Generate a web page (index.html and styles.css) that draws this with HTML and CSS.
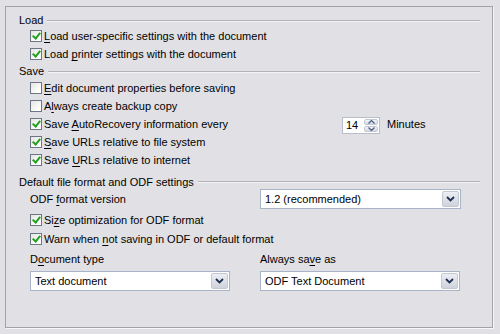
FILE: index.html
```html
<!DOCTYPE html>
<html lang="en">

<head>
    <meta charset="UTF-8">
    <title>Load/Save - General</title>
    <link rel="stylesheet" href="styles.css">
</head>

<body>
    <div class="panel">
        <div class="group-title"><span>Load</span></div>
        <div class="rows">
            <div class="row"><span class="check on"></span><span><u>L</u>oad user-specific settings with the document</span></div>
            <div class="row"><span class="check on"></span><span>Load <u>p</u>rinter settings with the document</span></div>
        </div>

        <div class="group-title save"><span>Save</span></div>
        <div class="rows">
            <div class="row"><span class="check"></span><span><u>E</u>dit document properties before saving</span></div>
            <div class="row"><span class="check"></span><span>A<u>l</u>ways create backup copy</span></div>
            <div class="row autosave">
                <span class="check on"></span><span class="label">Save <u>A</u>utoRecovery information every</span>
                <div class="spin">
                    <span class="spin-value">14</span>
                    <span class="spin-buttons">
                        <span class="spin-btn"><svg width="7" height="4" viewBox="0 0 7 4"><path d="M0.5 3.5 L3.5 0.5 L6.5 3.5" fill="none" stroke="#4d6185" stroke-width="1.3"/></svg></span>
                        <span class="spin-btn"><svg width="7" height="4" viewBox="0 0 7 4"><path d="M0.5 0.5 L3.5 3.5 L6.5 0.5" fill="none" stroke="#4d6185" stroke-width="1.3"/></svg></span>
                    </span>
                </div>
                <span class="unit">Minutes</span>
            </div>
            <div class="row"><span class="check on"></span><span><u>S</u>ave URLs relative to file system</span></div>
            <div class="row"><span class="check on"></span><span>Save <u>U</u>RLs relative to internet</span></div>
        </div>

        <div class="group-title odf"><span>Default file format and ODF settings</span></div>
        <div class="rows">
            <div class="row version">
                <span class="label">ODF <u>f</u>ormat version</span>
                <div class="combo wide">
                    <span class="combo-text">1.2 (recommended)</span>
                    <span class="combo-btn"><svg width="9" height="6" viewBox="0 0 9 6"><path d="M1 1 L4.5 4.5 L8 1" fill="none" stroke="#1f2f4f" stroke-width="1.8"/></svg></span>
                </div>
            </div>
            <div class="row size"><span class="check on"></span><span>Si<u>z</u>e optimization for ODF format</span></div>
            <div class="row warn"><span class="check on"></span><span>Warn when <u>n</u>ot saving in ODF or default format</span></div>
            <div class="pair labels">
                <span>D<u>o</u>cument type</span>
                <span>Always sa<u>v</u>e as</span>
            </div>
            <div class="pair combos">
                <div class="combo">
                    <span class="combo-text">Text document</span>
                    <span class="combo-btn"><svg width="9" height="6" viewBox="0 0 9 6"><path d="M1 1 L4.5 4.5 L8 1" fill="none" stroke="#1f2f4f" stroke-width="1.8"/></svg></span>
                </div>
                <div class="combo">
                    <span class="combo-text">ODF Text Document</span>
                    <span class="combo-btn"><svg width="9" height="6" viewBox="0 0 9 6"><path d="M1 1 L4.5 4.5 L8 1" fill="none" stroke="#1f2f4f" stroke-width="1.8"/></svg></span>
                </div>
            </div>
        </div>
    </div>
</body>

</html>
```

FILE: styles.css
```css
* {
    box-sizing: border-box;
}

body {
    margin: 0;
    padding: 6px 0 0 5px;
    width: 500px;
    height: 334px;
    background-color: #e1e0e4;
    font-family: "Liberation Sans", Arial, sans-serif;
    font-size: 11px;
    color: #000000;
    overflow: hidden;
}

u {
    text-decoration-thickness: 1px;
    text-underline-offset: 2px;
}

.panel {
    width: 488px;
    height: 322px;
    border: 1px solid #a3a3a6;
    box-shadow: 1px 1px 0 #f7f7f9;
    padding: 6px 12px 0 13px;
}

/* group heading with rule */
.group-title {
    display: flex;
    align-items: center;
    gap: 4px;
    height: 14px;
}

.group-title::after {
    content: "";
    flex: 1;
    border-top: 1px solid #b2b1b6;
    box-shadow: 0 1px 0 #f4f4f6;
}

.group-title.save {
    height: 16px;
}

.group-title.odf {
    height: 15px;
    margin-top: 5px;
}

.rows {
    padding-left: 11px;
}

.row {
    display: flex;
    align-items: center;
    gap: 2px;
    height: 18px;
}

.rows:first-of-type .row:first-child {
    height: 17px;
}

/* checkbox */
.check {
    width: 12px;
    height: 12px;
    border: 1px solid #6b7786;
    background: linear-gradient(135deg, #e4e4e0 0%, #ffffff 80%);
    position: relative;
    flex: none;
}

.check.on::after {
    content: "";
    position: absolute;
    left: 3px;
    top: 0;
    width: 3px;
    height: 6px;
    border: solid #21a121;
    border-width: 0 2px 2px 0;
    transform: rotate(40deg);
}

/* autorecovery spin field */
.autosave .label {
    width: 296px;
}

.spin {
    display: flex;
    width: 38px;
    height: 17px;
    border: 1px solid #b9bfc9;
    background: #ffffff;
    margin-top: 3px;
}

.spin-value {
    flex: 1;
    padding: 1px 0 0 3px;
}

.spin-buttons {
    display: flex;
    flex-direction: column;
    width: 16px;
    padding: 1px;
    gap: 1px;
}

.spin-btn {
    flex: 1;
    display: flex;
    align-items: center;
    justify-content: center;
    background: linear-gradient(#f3f4f8, #d3d8e4);
    border: 1px solid #c3c8d4;
    border-radius: 2px;
}

.unit {
    margin-left: 5px;
}

/* combo boxes */
.version {
    height: 20px;
    gap: 0;
}

.version .label {
    width: 230px;
}

.combo {
    display: flex;
    align-items: center;
    width: 200px;
    height: 20px;
    border: 1px solid #a8b5c9;
    background: #ffffff;
    padding: 1px;
}

.combo.wide {
    width: 201px;
}

.combo-text {
    flex: 1;
    padding-left: 3px;
}

.combo-btn {
    width: 17px;
    height: 16px;
    display: flex;
    align-items: center;
    justify-content: center;
    background: linear-gradient(#eceef4, #cfd3dc);
    border: 1px solid #c4c8d2;
    border-radius: 2px;
}

.size {
    margin-top: 2px;
}

.warn {
    margin-top: 1px;
}

.pair {
    display: grid;
    grid-template-columns: 200px 201px;
    column-gap: 30px;
}

.labels {
    height: 18px;
    align-items: center;
    margin-top: 2px;
}

.combos {
    margin-top: 3px;
}
```
